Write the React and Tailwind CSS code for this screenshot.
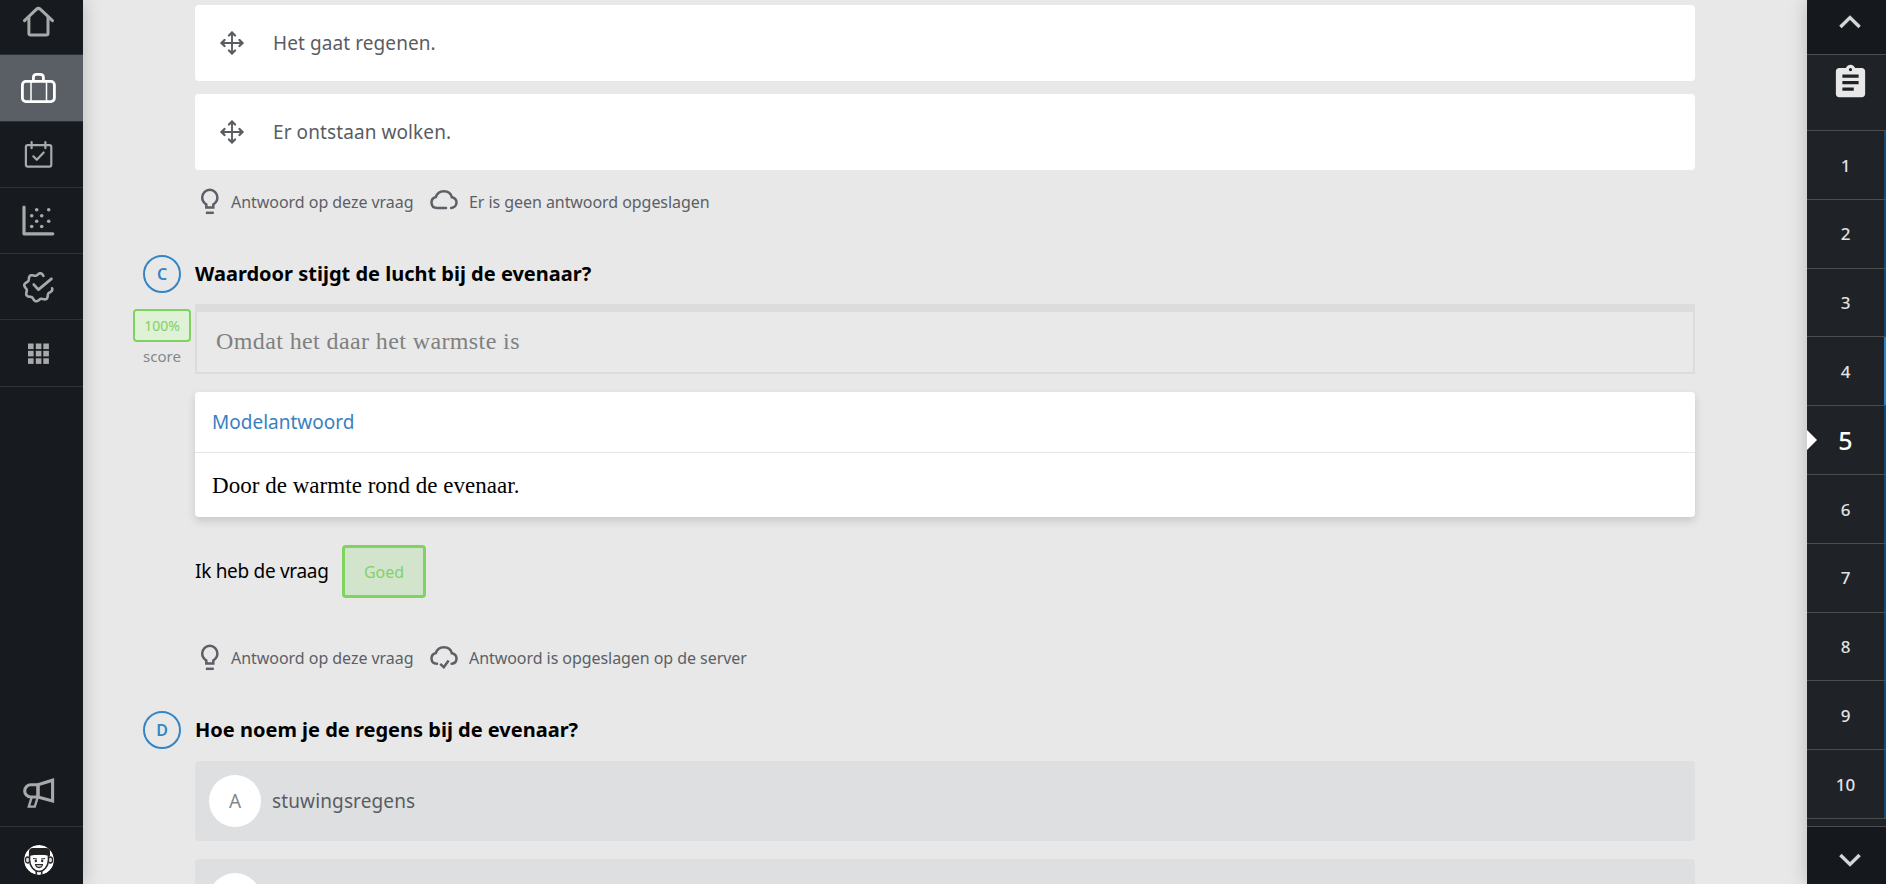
import React from 'react';
import { MdAssignment } from 'react-icons/md';
import clsx from 'clsx';

/* ---------- Sidebar icons (36x36) ---------- */

function Icon({ children, strokeWidth = 2.8 }) {
  return (
    <svg
      className="w-9 h-9 shrink-0"
      viewBox="0 0 36 36"
      fill="none"
      stroke="currentColor"
      strokeWidth={strokeWidth}
      strokeLinecap="round"
      strokeLinejoin="round"
    >
      {children}
    </svg>
  );
}

function HomeIcon() {
  return (
    <Icon strokeWidth={3}>
      <path d="M4.5 17.7 16.3 6.3Q18.4 4.3 20.5 6.3L32.5 17.7" />
      <path d="M8.9 14.5V30.3Q8.9 32 10.6 32H26.2Q28 32 28 30.3V14.5" />
    </Icon>
  );
}

function SuitcaseIcon() {
  return (
    <Icon>
      <rect x="2.4" y="11.4" width="32" height="20.2" rx="3.5" />
      <path d="M13.4 11V7.6Q13.4 4.4 16.6 4.4H20.2Q23.4 4.4 23.4 7.6V11" />
      <path d="M11 11.5V31.5M26.5 11.5V31.5" strokeWidth="1.5" />
    </Icon>
  );
}

function CalendarIcon() {
  return (
    <Icon strokeWidth={2.2}>
      <rect x="5.9" y="8.2" width="25.4" height="21.4" rx="1.8" />
      <path d="M11.6 5V11.2M25.4 5V11.2" />
      <path d="M13.3 19.3 16.8 22.8 23.7 15.5" />
    </Icon>
  );
}

const dots = [
  [11.7, 12.8], [11.7, 23.5], [16.7, 6.8], [16.7, 18.2],
  [21.7, 12.8], [21.7, 23.5], [28.7, 6.8], [28.7, 18.2],
];

function ScatterIcon() {
  return (
    <Icon strokeWidth={3.2}>
      <path d="M4 4V30.8H32.8" />
      {dots.map(([x, y]) => (
        <circle key={`${x}-${y}`} cx={x} cy={y} r="1.8" fill="currentColor" stroke="none" />
      ))}
    </Icon>
  );
}

// Scalloped ring with eight lobes, open at the top right
const badgePath = Array.from({ length: 101 }, (_, i) => {
  const deg = 4 + i * 2.9;
  const r = 13 + 1.2 * Math.cos(((deg - 10) * 8 * Math.PI) / 180);
  const a = (deg * Math.PI) / 180;
  return `${(18.3 + r * Math.cos(a)).toFixed(2)} ${(18.3 + r * Math.sin(a)).toFixed(2)}`;
}).join('L');

function BadgeIcon() {
  return (
    <Icon strokeWidth={2.6}>
      <path d={`M${badgePath}`} />
      <path d="M13.8 15.6 18.4 20.6 31.4 9.8" strokeWidth="2.8" />
    </Icon>
  );
}

function AppsIcon() {
  return (
    <Icon>
      {[8.5, 15.8, 23.3].map((y) =>
        [8, 15.8, 23.3].map((x) => (
          <rect key={`${x}-${y}`} x={x} y={y} width="5.6" height="5.6" fill="currentColor" stroke="none" />
        ))
      )}
    </Icon>
  );
}

function MegaphoneIcon() {
  return (
    <svg className="w-9 h-9 shrink-0" viewBox="0 0 36 36" fill="none" stroke="currentColor" strokeWidth="3.1">
      <path d="M18 9.8 32.6 5.2V26L18 22Z" />
      <path d="M18 9.8H10.8A6.1 6.1 0 0 0 10.8 22H18Z" />
      <path d="M11.6 22.5 8.8 31.6H14.8L17.6 22.5" strokeWidth="2.4" />
    </svg>
  );
}

function Avatar() {
  return (
    <svg className="w-[30px] h-[30px] rounded-full" viewBox="0 0 30 30" fill="none" stroke="#2b2b2b">
      <circle cx="15" cy="15" r="15" fill="#fff" stroke="none" />
      <ellipse cx="3.6" cy="15" rx="2.2" ry="3" strokeWidth="1.3" fill="#ddd" />
      <ellipse cx="26.4" cy="15" rx="2.2" ry="3" strokeWidth="1.3" fill="#ddd" />
      <path d="M12.3 25V30M17.7 25V30" strokeWidth="1.6" />
      <path d="M5.6 9V15C5.6 21.5 10.5 26.4 15 26.4S24.4 21.5 24.4 15V9Z" strokeWidth="1.5" fill="#fff" />
      <path d="M5 11V6.5Q5 3 9 3H22Q26 3 26 6.5V11Q15 8.6 5 11Z" fill="#222" stroke="none" />
      <path d="M9 13.5 13 14M21 13.5 17 14" strokeWidth="1" />
      <circle cx="11.8" cy="16" r="1.2" fill="#2b2b2b" stroke="none" />
      <circle cx="18.2" cy="16" r="1.2" fill="#2b2b2b" stroke="none" />
      <path d="M11.5 19.5H18.5Q18 22.6 15 22.6T11.5 19.5Z" strokeWidth="1.1" fill="#bbb" />
    </svg>
  );
}

function Chevron({ down }) {
  return (
    <svg
      className={clsx('w-6 h-4', down && 'rotate-180')}
      viewBox="0 0 24 16"
      fill="none"
      stroke="currentColor"
      strokeWidth="3.5"
    >
      <path d="M2.4 13 12 3.6 21.6 13" />
    </svg>
  );
}

/* ---------- Content icons ---------- */

function MoveIcon() {
  return (
    <svg
      className="w-6 h-6 shrink-0"
      viewBox="0 0 24 24"
      fill="none"
      stroke="currentColor"
      strokeWidth="2.3"
      strokeLinecap="round"
      strokeLinejoin="round"
    >
      <path d="M12 1.5V22.5M1.5 12H22.5" strokeWidth="1.9" />
      <path d="M9 4.5 12 1.5 15 4.5M9 19.5 12 22.5 15 19.5M4.5 9 1.5 12 4.5 15M19.5 9 22.5 12 19.5 15" />
    </svg>
  );
}

function BulbIcon() {
  return (
    <svg className="w-5 h-7 shrink-0 -mt-[2px]" viewBox="0 0 20 28" fill="none" stroke="currentColor" strokeWidth="2.5">
      <path d="M6.3 20.4V17.4C3.8 15.6 2.2 13.4 2.2 10.4A7.6 7.6 0 0 1 17.4 10.4C17.4 13.4 15.8 15.6 13.3 17.4V20.4Z" />
      <path d="M5.9 25.8H13.8" />
    </svg>
  );
}

function CloudIcon({ saved }) {
  return (
    <svg
      className="w-7 h-6 shrink-0 -mt-[3px]"
      viewBox="0 0 28 24"
      fill="none"
      stroke="currentColor"
      strokeWidth="2.5"
      strokeLinecap="round"
    >
      {saved ? (
        <>
          <path d="M7 18.7C3.6 18.5 1.5 16.4 1.5 13.4 1.5 10.6 3.3 8.6 5.9 8 7 4.4 10 2.2 13.8 2.2 18 2.2 21 4.6 21.8 8.2 24.8 8.8 26.5 10.8 26.5 13.5 26.5 16.4 24.6 18.5 21.6 18.7" />
          <path d="M10.2 18.8 13.8 22.2 18.6 15.6" strokeLinecap="butt" />
        </>
      ) : (
        <path d="M16 18.9H7.4C3.6 18.9 1.5 16.6 1.5 13.4 1.5 10.6 3.3 8.6 5.9 8 7 4.4 10 2.2 13.8 2.2 18 2.2 21 4.6 21.8 8.2 24.8 8.8 26.5 10.8 26.5 13.5 26.5 16.4 24.4 18.7 21.2 18.9" />
      )}
    </svg>
  );
}

/* ---------- Side bars ---------- */

const navItems = [
  { id: 'home', icon: <HomeIcon />, height: 'h-[67px] -mt-3' },
  { id: 'books', icon: <SuitcaseIcon />, height: 'h-[67px]', active: true },
  { id: 'planner', icon: <CalendarIcon />, height: 'h-[66px]' },
  { id: 'results', icon: <ScatterIcon />, height: 'h-[66px]' },
  { id: 'tests', icon: <BadgeIcon />, height: 'h-[66px]' },
  { id: 'apps', icon: <AppsIcon />, height: 'h-[67px]' },
];

function NavBar() {
  return (
    <nav className="w-[83px] shrink-0 flex flex-col bg-[#171a1e] text-[#a8a9aa] shadow-[0_0_18px_rgba(0,0,0,0.2)] z-10">
      {navItems.map((item) => (
        <div
          key={item.id}
          className={clsx(
            'shrink-0 flex items-center pl-5 border-b border-[#2e3238]',
            item.height,
            item.active && 'bg-[#5a5e65] text-white'
          )}
        >
          {item.icon}
        </div>
      ))}
      <div className="mt-auto h-[67px] flex items-center pl-5 border-b border-[#2e3238]">
        <MegaphoneIcon />
      </div>
      <div className="h-[57px] pt-[18px] pl-6">
        <Avatar />
      </div>
    </nav>
  );
}

const CURRENT = 5;
const HIGHLIGHTED = 4;

function QuestionBar() {
  return (
    <aside className="w-[79px] shrink-0 flex flex-col bg-[#1f2226] text-[#e2e2e2] shadow-[0_0_18px_rgba(0,0,0,0.2)] z-10">
      <div className="h-[55px] shrink-0 bg-[#15181c] border-b border-[#4a4d50] pt-[14px] pl-[31px] text-[#d4d5d6]">
        <Chevron />
      </div>
      <div className="h-[76px] shrink-0 border-b border-[#4a4d50] pt-2 pl-6 text-[#e8e8e8]">
        <MdAssignment className="w-[39px] h-[39px]" />
      </div>
      {Array.from({ length: 10 }, (_, i) => i + 1).map((n) => (
        <div
          key={n}
          className="relative h-[68.8px] shrink-0 flex border-b border-[#4a4d50] font-medium"
        >
          {n === CURRENT && (
            <svg className="absolute left-0 top-6 w-[10px] h-5" viewBox="0 0 10 20">
              <path d="M0 0 10 10 0 20Z" fill="#fff" />
            </svg>
          )}
          <span
            className={clsx(
              'flex-1 flex items-center justify-center pt-px',
              n === CURRENT ? 'text-[25px] text-white' : 'text-[17px]'
            )}
          >
            {n}
          </span>
          <span className={clsx('w-[2px]', n === HIGHLIGHTED ? 'bg-[#3182c4]' : 'bg-[#174a73]')} />
        </div>
      ))}
      <div className="mt-auto h-[58px] shrink-0 bg-[#15181c] border-t border-[#4a4d50] pt-[25px] pl-[31px] text-[#d4d5d6]">
        <Chevron down />
      </div>
    </aside>
  );
}

/* ---------- Questions ---------- */

function DragItem({ children }) {
  return (
    <div className="h-[76px] flex items-center pl-[25px] gap-[29px] bg-white rounded text-[19px] text-[#595d62]">
      <MoveIcon />
      <span className="pt-px tracking-[0.09px]">{children}</span>
    </div>
  );
}

function StatusRow({ saved, children }) {
  return (
    <div className="h-16 flex items-center pl-[5px] text-base text-[#5c6066]">
      <BulbIcon />
      <span className="w-[182px] ml-[11px] tracking-[-0.04px] whitespace-nowrap">Antwoord op deze vraag</span>
      <span className="ml-[17px]">
        <CloudIcon saved={saved} />
      </span>
      <span className="ml-[11px] tracking-[-0.06px]">{children}</span>
    </div>
  );
}

function Question({ letter, title, score, children }) {
  return (
    <section className="flex gap-1 mt-[21px]">
      <div className="w-[58px] shrink-0 flex flex-col items-center">
        <div className="w-[38px] h-[38px] flex items-center justify-center rounded-full border-2 border-[#3584c4] text-[#3584c4] text-base font-semibold">
          {letter}
        </div>
        {score && (
          <>
            <div className="w-[58px] h-[33px] mt-4 flex items-center justify-center rounded border-2 border-[#7ed35f] bg-[#dff2d8] text-[#7fd062] text-sm">
              {score}
            </div>
            <span className="mt-[3px] text-[15px] leading-[22px] text-[#83878b]">score</span>
          </>
        )}
      </div>
      <div className="w-[1500px]">
        <h3 className="h-[38px] flex items-center text-xl font-bold text-black">{title}</h3>
        {children}
      </div>
    </section>
  );
}

function Option({ letter, children }) {
  return (
    <div className="h-20 flex items-center pl-[14px] gap-[11px] rounded bg-[#dedfe1] text-[19px] text-[#595d62]">
      <span className="w-[52px] h-[52px] shrink-0 flex items-center justify-center rounded-full bg-white text-[#83878e]">
        {letter}
      </span>
      <span className="tracking-[0.13px]">{children}</span>
    </div>
  );
}

export default function App() {
  return (
    <div className="flex w-[1886px] h-[884px] overflow-hidden bg-[#e8e8e8] font-['Noto_Sans','Open_Sans',sans-serif]">
      <NavBar />

      <main className="flex-1 min-w-0 pl-[50px] pt-[5px]">
        {/* Question B, last two draggable answers */}
        <div className="w-[1500px] ml-[62px]">
          <div className="flex flex-col gap-[13px]">
            <DragItem>Het gaat regenen.</DragItem>
            <DragItem>Er ontstaan wolken.</DragItem>
          </div>
          <StatusRow>Er is geen antwoord opgeslagen</StatusRow>
        </div>

        <Question letter="C" title="Waardoor stijgt de lucht bij de evenaar?" score="100%">
          <div className="mt-[11px] h-[70px] flex items-center pl-[19px] pb-[2px] border-2 border-t-8 border-[#dcdcdc] bg-[#e9e9e9] font-['Liberation_Serif',serif] text-2xl tracking-[0.39px] text-[#808080]">
            Omdat het daar het warmste is
          </div>

          {/* Model answer */}
          <div className="mt-[18px] h-[125px] rounded bg-white shadow-[0_4px_8px_rgba(0,0,0,0.14)]">
            <div className="h-[61px] flex items-center pl-[17px] border-b border-[#e6e6e6] text-[19px] text-[#3a80bf]">
              Modelantwoord
            </div>
            <div className="h-16 flex items-center pl-[17px] pt-[2px] font-['Liberation_Serif',serif] text-[23px] tracking-[0.03px] text-black">
              Door de warmte rond de evenaar.
            </div>
          </div>

          <div className="mt-7 flex items-center gap-[14px] text-[19px] text-black">
            <span className="w-[133px] tracking-[-0.3px] whitespace-nowrap">Ik heb de vraag</span>
            <button className="w-[84px] h-[53px] rounded border-[3px] border-[#7fd45f] bg-[#d2e4cc] text-base text-[#83d168]">
              Goed
            </button>
          </div>

          <div className="mt-7">
            <StatusRow saved>Antwoord is opgeslagen op de server</StatusRow>
          </div>
        </Question>

        <Question letter="D" title="Hoe noem je de regens bij de evenaar?">
          <div className="mt-3 flex flex-col gap-[18px]">
            <Option letter="A">stuwingsregens</Option>
            <Option />
          </div>
        </Question>
      </main>

      <QuestionBar />
    </div>
  );
}
